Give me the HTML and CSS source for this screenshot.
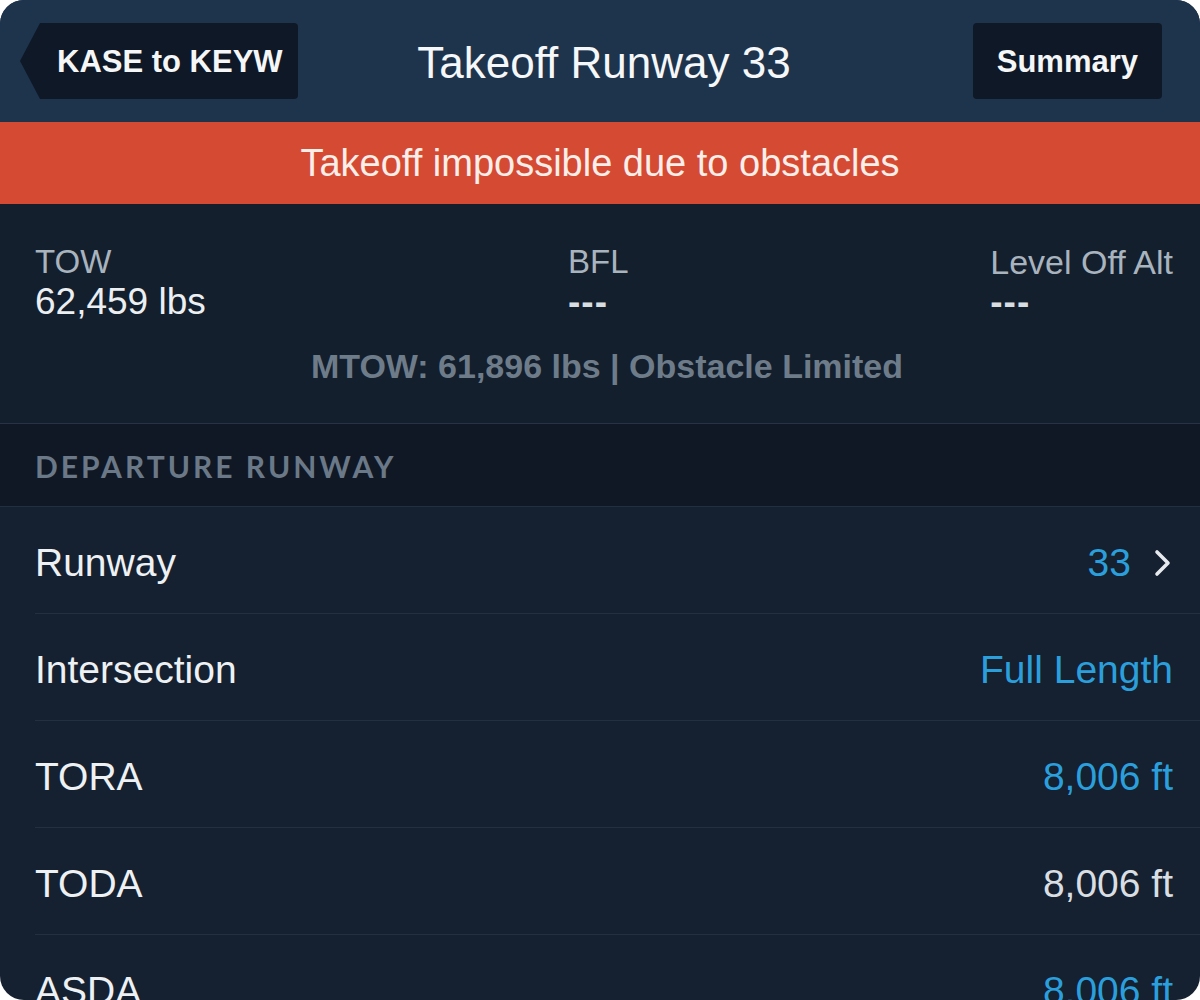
FILE: index.html
```html
<!DOCTYPE html>
<html>
<head>
<meta charset="utf-8">
<link rel="stylesheet" href="styles.css">
</head>
<body>
<div class="screen">
  <header class="navbar">
    <div class="nav-left"><div class="back-btn">KASE to KEYW</div></div>
    <div class="nav-title">Takeoff Runway 33</div>
    <div class="nav-right"><div class="summary-btn">Summary</div></div>
  </header>
  <div class="alert">Takeoff impossible due to obstacles</div>
  <section class="stats">
    <div class="stat-grid">
      <div class="stat">
        <div class="stat-label">TOW</div>
        <div class="stat-value">62,459 lbs</div>
      </div>
      <div class="stat">
        <div class="stat-label">BFL</div>
        <div class="stat-value dashes">---</div>
      </div>
      <div class="stat stat-end">
        <div class="stat-label">Level Off Alt</div>
        <div class="stat-value dashes">---</div>
      </div>
    </div>
    <div class="mtow">MTOW: 61,896 lbs | Obstacle Limited</div>
  </section>
  <div class="section-header">DEPARTURE RUNWAY</div>
  <div class="rows">
    <div class="row">
      <span class="row-label">Runway</span>
      <span class="row-value blue with-chevron">33
        <svg class="chevron" width="20" height="28" viewBox="0 0 20 28"><path d="M4 3 L15 14 L4 25" fill="none" stroke="#e6eaee" stroke-width="3.6" stroke-linecap="round" stroke-linejoin="round"/></svg>
      </span>
    </div>
    <div class="row">
      <span class="row-label">Intersection</span>
      <span class="row-value blue">Full Length</span>
    </div>
    <div class="row">
      <span class="row-label">TORA</span>
      <span class="row-value blue">8,006 ft</span>
    </div>
    <div class="row">
      <span class="row-label">TODA</span>
      <span class="row-value">8,006 ft</span>
    </div>
    <div class="row">
      <span class="row-label">ASDA</span>
      <span class="row-value blue">8,006 ft</span>
    </div>
  </div>
</div>
</body>
</html>
```
FILE: styles.css
```css
html, body {
  margin: 0;
  padding: 0;
  background: #ffffff;
}
body {
  font-family: "Liberation Sans", Arial, Helvetica, sans-serif;
}
.screen {
  width: 1200px;
  height: 1000px;
  border-radius: 24px;
  overflow: hidden;
  background: #152130;
  display: flex;
  flex-direction: column;
}
.navbar {
  height: 122px;
  flex: none;
  background: #1e344d;
  display: grid;
  grid-template-columns: 1fr auto 1fr;
  align-items: center;
  padding: 0 38px;
  box-sizing: border-box;
}
.nav-left {
  display: flex;
  justify-content: flex-start;
}
.nav-right {
  display: flex;
  justify-content: flex-end;
}
.back-btn {
  position: relative;
  height: 76px;
  margin-left: 2px;
  padding: 2px 15px 0 17px;
  box-sizing: border-box;
  background: #0f1826;
  border-radius: 0 4px 4px 0;
  color: #f4f6f8;
  font-weight: 700;
  font-size: 31px;
  display: flex;
  align-items: center;
}
.back-btn::before {
  content: "";
  position: absolute;
  left: -20px;
  top: 0;
  width: 20px;
  height: 76px;
  background: #0f1826;
  clip-path: polygon(100% 0, 100% 100%, 0 50%);
}
.summary-btn {
  height: 76px;
  padding: 2px 24px 0;
  box-sizing: border-box;
  background: #0f1826;
  border-radius: 4px;
  color: #f4f6f8;
  font-weight: 700;
  font-size: 31px;
  display: flex;
  align-items: center;
}
.nav-title {
  color: #f5f7f9;
  font-size: 44px;
  padding-left: 8px;
  padding-top: 4px;
  text-align: center;
}
.alert {
  height: 82px;
  flex: none;
  background: #d44a33;
  color: #fbeee9;
  font-size: 38px;
  display: flex;
  align-items: center;
  justify-content: center;
}
.stats {
  flex: none;
  background: #131f2d;
  padding: 38px 27px 37px 35px;
  border-bottom: 1px solid #263344;
}
.stat-grid {
  display: grid;
  grid-template-columns: 533px 1fr auto;
}
.stat-label {
  color: #a8b3be;
  font-size: 33px;
  line-height: 40px;
}
.stat-end .stat-label {
  font-size: 34px;
}
.stat-value {
  color: #eceff2;
  font-size: 37px;
  line-height: 40px;
}
.stat-value.dashes {
  font-weight: 700;
  letter-spacing: 1px;
  color: #d8dde2;
}
.mtow {
  margin-top: 24px;
  text-align: center;
  color: #6e7c8a;
  font-weight: 700;
  font-size: 34px;
  line-height: 40px;
  padding-left: 6px;
}
.section-header {
  flex: none;
  height: 83px;
  box-sizing: border-box;
  background: #0f1824;
  border-bottom: 1px solid #222f3e;
  display: flex;
  align-items: center;
  padding-left: 35px;
  padding-top: 2px;
  color: #6b7888;
  font-family: Lato, "Open Sans", sans-serif;
  font-weight: 700;
  font-size: 30px;
  letter-spacing: 3px;
}
.rows {
  display: flex;
  flex-direction: column;
}
.row {
  height: 107px;
  box-sizing: border-box;
  margin-left: 35px;
  padding-right: 27px;
  padding-top: 6px;
  border-bottom: 1px solid #223040;
  display: flex;
  align-items: center;
  justify-content: space-between;
  flex: none;
}
.row-label {
  color: #eef1f4;
  font-size: 39px;
}
.row-value {
  color: #d9dee3;
  font-size: 39px;
  display: flex;
  align-items: center;
}
.row-value.blue {
  color: #2b9fdc;
}
.chevron {
  margin-left: 22px;
}
```
